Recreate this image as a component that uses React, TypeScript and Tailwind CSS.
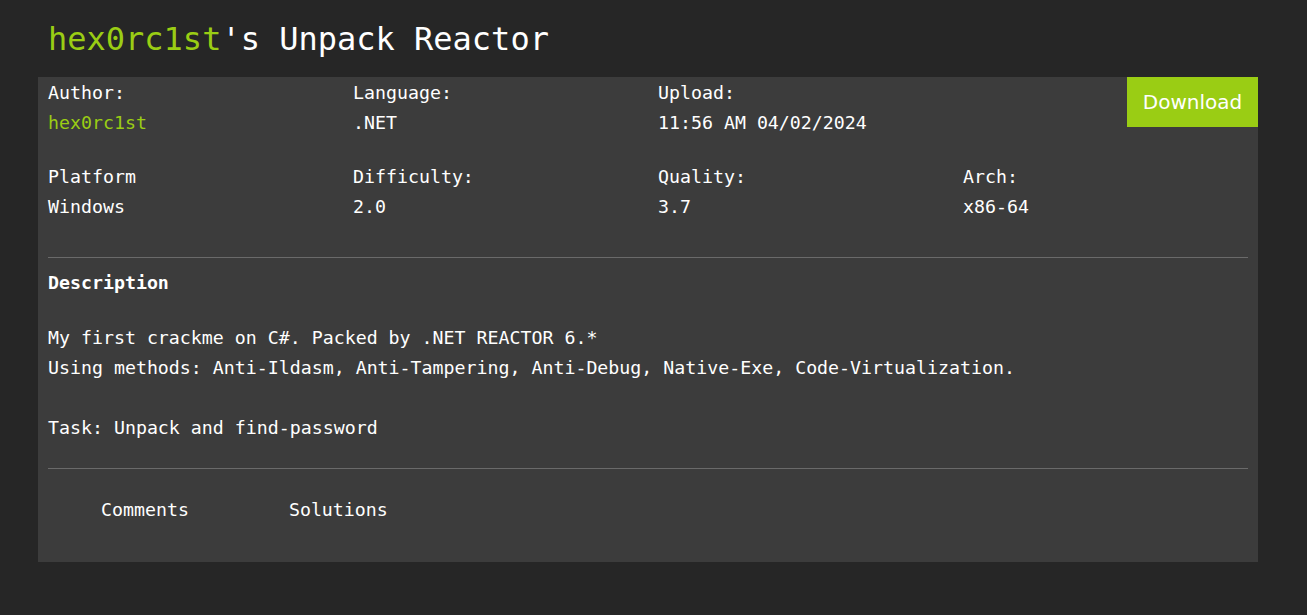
import React from "react";

const mono = "font-['DejaVu_Sans_Mono','Liberation_Mono',monospace]";

function Field({ label, value, green }: { label: string; value: string; green?: boolean }) {
  return (
    <div className="pl-[10px]">
      <div className="h-[30px] leading-[30px]">{label}</div>
      <div className={`h-[30px] leading-[30px] ${green ? "text-[#9acd14]" : ""}`}>{value}</div>
    </div>
  );
}

export default function App() {
  return (
    <div className={`min-h-[615px] w-full bg-[#262626] text-white ${mono}`}>
      <div className="pl-[38px] pr-[49px] pt-[18px]">
        <h1 className="pl-[10px] text-[32px] leading-[42px] h-[59px]">
          <span className="text-[#9acd14]">hex0rc1st</span>'s Unpack Reactor
        </h1>
        <div className="bg-[#3c3c3c] text-[18.25px] relative pt-[1px] pb-[20px]">
          <a className="absolute right-0 top-0 w-[131px] h-[50px] bg-[#9acd14] text-[20px] flex items-center justify-center font-['DejaVu_Sans',sans-serif] text-white">
            Download
          </a>
          <div className="grid grid-cols-4">
            <Field label="Author:" value="hex0rc1st" green />
            <Field label="Language:" value=".NET" />
            <Field label="Upload:" value="11:56 AM 04/02/2024" />
            <div />
          </div>
          <div className="grid grid-cols-4 mt-[24px]">
            <Field label="Platform" value="Windows" />
            <Field label="Difficulty:" value="2.0" />
            <Field label="Quality:" value="3.7" />
            <Field label="Arch:" value="x86-64" />
          </div>
          <div className="mx-[10px] mt-[35px] border-t border-[#6a6a6a]" />
          <div className="px-[10px] pt-[10px]">
            <div className="font-bold h-[30px] leading-[30px]">Description</div>
            <div className="mt-[25px] leading-[30px] whitespace-pre-line">
              {"My first crackme on C#. Packed by .NET REACTOR 6.*\nUsing methods: Anti-Ildasm, Anti-Tampering, Anti-Debug, Native-Exe, Code-Virtualization.\n\u00a0\nTask: Unpack and find-password"}
            </div>
          </div>
          <div className="mx-[10px] mt-[25px] border-t border-[#6a6a6a]" />
          <div className="flex pl-[63px] pt-[26px] gap-[100px] h-[73px]">
            <div className="h-[30px] leading-[30px]">Comments</div>
            <div className="h-[30px] leading-[30px]">Solutions</div>
          </div>
        </div>
      </div>
    </div>
  );
}
